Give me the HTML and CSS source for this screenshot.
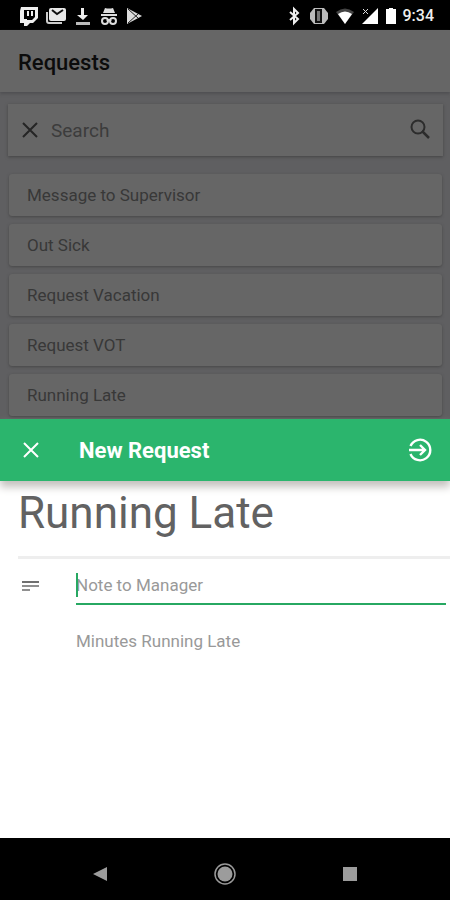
FILE: index.html
```html
<!DOCTYPE html>
<html lang="en">
<head>
<meta charset="utf-8">
<meta name="viewport" content="width=device-width, initial-scale=1">
<title>New Request</title>
<link rel="stylesheet" href="styles.css">
</head>
<body>
<div class="status-bar">
  <div class="status-group notifications">
    <svg width="20" height="20" viewBox="0 0 20 20"><path fill="#eee" fill-rule="evenodd" d="M2 1h17v11l-5 5h-3l-3 3H5v-3H1V5zM5 4v9h3v1h5l3-3V4z"/><path fill="#eee" d="M8 5h2v5H8zM12 5h2v5h-2z"/></svg>
    <svg width="22" height="20" viewBox="0 0 22 20"><path fill="none" stroke="#ccc" stroke-width="2" d="M2 6v9q0 2 2 2h13"/><rect x="4" y="2" width="17" height="13" rx="2" fill="#e8e8e8"/><path fill="none" stroke="#111" stroke-width="2" d="M7 4l5 4 6-4"/></svg>
    <svg width="20" height="20" viewBox="0 0 20 20"><path fill="#eee" d="M8 2h3v7h4l-5 5-6-5h4z"/><path fill="#bbb" d="M3 16h14v3H3z"/></svg>
    <svg width="20" height="20" viewBox="0 0 20 20"><path fill="#ddd" d="M6 2q4 1 8 0l2 5H4zM2 8h16v2H2z"/><path fill="none" stroke="#ddd" stroke-width="2" d="M8 15q2-2 4 0"/><circle cx="6" cy="15" r="3" fill="none" stroke="#ddd" stroke-width="2"/><circle cx="14" cy="15" r="3" fill="none" stroke="#ddd" stroke-width="2"/></svg>
    <svg width="20" height="20" viewBox="0 0 20 20"><path fill="#ddd" d="M2 2l15 8-15 8z"/><path fill="none" stroke="#222" d="M3 3l10 9M3 17l10-9"/></svg>
  </div>
  <div class="status-group">
    <svg width="14" height="20" viewBox="0 0 14 20"><path fill="none" stroke="#eee" stroke-width="2" d="M1 6l8 7-4 4V3l4 4-8 7"/></svg>
    <svg width="20" height="20" viewBox="0 0 20 20"><path fill="#bbb" d="M5 2h10l4 5v6l-4 5H5l-4-5V7z"/><path fill="#777" stroke="#111" stroke-width="2" d="M7 4h5v12H7z"/></svg>
    <svg width="20" height="20" viewBox="0 0 20 20"><path fill="#444" d="M1 6q9-7 18 0l-9 12z"/><path fill="#fff" d="M3 8q7-5 14 0l-7 10z"/></svg>
    <svg width="18" height="20" viewBox="0 0 18 20"><path fill="#fff" d="M17 2v16H1z"/><path fill="#000" d="M1 1h8v8H1z"/><path fill="none" stroke="#ddd" d="M2 3l5 5M7 3L2 8"/></svg>
    <svg width="12" height="20" viewBox="0 0 12 20"><path fill="#fff" d="M4 2h4v1h3v15H1V3h3z"/></svg>
    <time class="clock">9:34</time>
  </div>
</div>

<section class="requests">
  <header class="requests-header"><h1>Requests</h1></header>
  <div class="requests-body">
    <form class="search">
      <button type="button" class="icon-button" aria-label="Clear search"><svg width="22" height="22" viewBox="0 0 22 22"><path fill="none" stroke="#252525" stroke-width="2" d="M4 4l14 14M18 4L4 18"/></svg></button>
      <input type="search" placeholder="Search" aria-label="Search">
      <button type="submit" class="icon-button" aria-label="Search"><svg width="22" height="22" viewBox="0 0 22 22"><circle cx="9" cy="8" r="6.500" fill="none" stroke="#2c2c2c" stroke-width="2"/><path fill="none" stroke="#2c2c2c" stroke-width="2.500" d="M13 12l7 7"/></svg></button>
    </form>
    <ul class="request-list">
      <li><button type="button">Message to Supervisor</button></li>
      <li><button type="button">Out Sick</button></li>
      <li><button type="button">Request Vacation</button></li>
      <li><button type="button">Request VOT</button></li>
      <li><button type="button">Running Late</button></li>
    </ul>
  </div>
</section>

<main class="sheet">
  <header class="sheet-header">
    <button type="button" class="icon-button" aria-label="Close"><svg width="22" height="22" viewBox="0 0 22 22"><path fill="none" stroke="#fff" stroke-width="2" d="M4 4l14 14M18 4L4 18"/></svg></button>
    <h2>New Request</h2>
    <button type="button" class="icon-button" aria-label="Submit"><svg width="26" height="26" viewBox="0 0 26 26"><path fill="none" stroke="#fff" stroke-width="2.4" d="M3.5 9a10.300 10.300 0 1 1 0 8M2 13h16M13 8l5 5-5 5"/></svg></button>
  </header>
  <div class="sheet-body">
    <p class="request-name">Running Late</p>
    <form class="fields">
      <svg class="note-icon" width="18" height="14" viewBox="0 0 18 14"><path fill="#707070" d="M0 2h17v2H0z"/><path fill="#909090" d="M0 6h17v2H0zM0 10h8v2H0z"/></svg>
      <div class="field focused"><input type="text" placeholder="Note to Manager" aria-label="Note to Manager"></div>
      <div class="field minutes"><input type="text" inputmode="numeric" placeholder="Minutes Running Late" aria-label="Minutes Running Late"></div>
    </form>
  </div>
</main>

<nav class="system-nav">
  <button type="button" aria-label="Back"><svg width="24" height="24" viewBox="0 0 24 24"><path fill="#9c9c9c" d="M19 5v14L5 12z"/></svg></button>
  <button type="button" aria-label="Home"><svg width="24" height="24" viewBox="0 0 24 24"><circle cx="12" cy="12" r="10" fill="none" stroke="#999" stroke-width="1.500"/><circle cx="12" cy="12" r="7.500" fill="#9c9c9c"/></svg></button>
  <button type="button" aria-label="Overview"><svg width="24" height="24" viewBox="0 0 24 24"><path fill="#9c9c9c" d="M5 5h14v14H5z"/></svg></button>
</nav>
</body>
</html>
```

FILE: styles.css
```css
* { box-sizing: border-box; }

body {
  display: flex;
  flex-direction: column;
  min-height: 100vh;
  margin: 0;
  background: #fff;
  font-family: Roboto, sans-serif;
}

h1, h2, p, ul { margin: 0; }

button, input {
  padding: 0;
  border: 0;
  outline: 0;
  background: none;
  color: inherit;
  font: inherit;
}

svg { display: block; flex: none; }

.status-bar {
  display: flex;
  align-items: center;
  justify-content: space-between;
  height: 30px;
  padding: 2px 16px 0 19px;
  background: #000;
}

.status-group { display: flex; align-items: center; gap: 6px; }

.clock { color: #eee; font-size: 16px; font-weight: 500; line-height: 20px; }

.requests { background: #5f5f61; }

.requests-header {
  height: 62px;
  padding: 0 18px;
  background: #666;
  box-shadow: 0 2px 3px #505052;
}

.requests-header h1 {
  color: #0c0c0c;
  font-size: 22px;
  font-weight: 500;
  line-height: 66px;
}

.requests-body { padding: 12px 7px 3px 8px; }

.search {
  display: flex;
  align-items: center;
  gap: 10px;
  height: 52px;
  padding: 0 12px 0 11px;
  background: #666;
  box-shadow: 0 1px 3px #444;
}

.search input { flex: 1; min-width: 0; color: #3c3c3c; font-size: 19px; }
.search input::placeholder { color: #3c3c3c; opacity: 1; }

.request-list {
  display: grid;
  gap: 8px;
  margin-top: 18px;
  padding: 0 1px;
  list-style: none;
}

.request-list button {
  display: block;
  width: 100%;
  height: 42px;
  padding: 0 18px;
  border-radius: 3px;
  background: #666;
  box-shadow: 0 1px 3px #484848;
  color: #383838;
  font-size: 17px;
  text-align: left;
}

.sheet { position: relative; flex: 1; background: #fff; }

.sheet-header {
  display: flex;
  align-items: center;
  height: 62px;
  padding: 0 17px 0 20px;
  background: #2bb56d;
  box-shadow: 0 6px 8px #c4c1be;
  color: #fff;
}

.sheet-header h2 {
  flex: 1;
  padding-left: 37px;
  font-size: 22px;
  font-weight: 700;
}

.sheet-body { padding-left: 18px; }

.request-name {
  height: 78px;
  padding-top: 4px;
  border-bottom: 3px solid #eee;
  color: #626262;
  font-size: 44px;
  line-height: 56px;
}

.fields {
  display: grid;
  grid-template-columns: 18px 1fr;
  column-gap: 36px;
  padding: 8px 4px 24px;
}

.note-icon { margin-top: 12px; }

.field { position: relative; height: 38px; }

.field input {
  display: block;
  width: 100%;
  height: 36px;
  color: #606060;
  font-size: 17px;
}

.field input::placeholder { color: #999; opacity: 1; }

.focused { border-bottom: 2px solid #27a862; }

.focused::before {
  content: "";
  position: absolute;
  top: 6px;
  left: 0;
  width: 2px;
  height: 24px;
  background: #27a862;
}

.minutes { grid-column: 2; margin-top: 18px; }

.system-nav {
  display: flex;
  align-items: center;
  justify-content: space-around;
  height: 62px;
  padding: 10px 38px 0;
  background: #000;
}
```
